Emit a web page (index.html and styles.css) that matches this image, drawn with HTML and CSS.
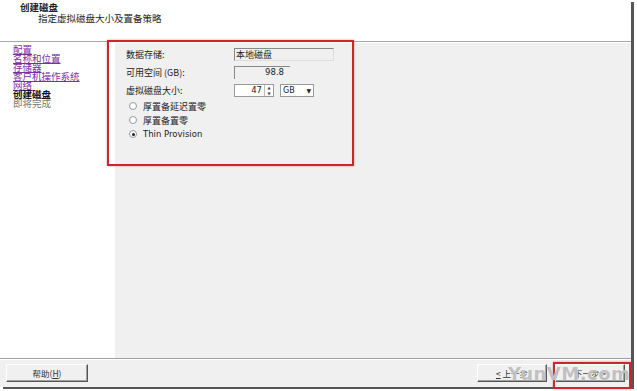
FILE: index.html
```html
<!DOCTYPE html>
<html lang="zh-CN">
<head>
  <meta charset="UTF-8" />
  <title>创建磁盘</title>
  <link rel="stylesheet" href="styles.css">
</head>
<body>
  <div class="window">
    <div class="header">
      <div class="title">创建磁盘</div>
      <div class="subtitle">指定虚拟磁盘大小及置备策略</div>
    </div>

    <div class="main">
      <div class="steps">
        <a href="#">配置</a>
        <a href="#">名称和位置</a>
        <a href="#">存储器</a>
        <a href="#">客户机操作系统</a>
        <a href="#">网络</a>
        <span class="current">创建磁盘</span>
        <span class="pending">即将完成</span>
      </div>

      <div class="content">
        <div class="form">
          <div class="row">
            <span class="label">数据存储:</span>
            <span class="field readonly">本地磁盘</span>
          </div>
          <div class="row">
            <span class="label">可用空间 (GB):</span>
            <span class="field number">98.8</span>
          </div>
          <div class="row">
            <span class="label">虚拟磁盘大小:</span>
            <span class="spinner">
              <span class="value">47</span>
              <span class="spin"><i>▲</i><i>▼</i></span>
            </span>
            <span class="combo">GB <b>▼</b></span>
          </div>
          <div class="radios">
            <label><span class="radio"></span>厚置备延迟置零</label>
            <label><span class="radio"></span>厚置备置零</label>
            <label><span class="radio checked"></span>Thin Provision</label>
          </div>
        </div>
      </div>
    </div>

    <div class="footer">
      <button class="btn">帮助(<u>H</u>)</button>
      <div class="nav">
        <button class="btn"><u>&lt;</u> 上一步</button>
        <button class="btn next">下一步 <u>&gt;</u></button>
      </div>
    </div>

    <!-- annotation marks drawn over the dialog -->
    <div class="mark mark-form"></div>
    <div class="mark mark-next"></div>
    <div class="watermark">YunVM.com</div>
  </div>
</body>
</html>
```

FILE: styles.css
```css
body {
  margin: 0;
  width: 637px;
  height: 391px;
  overflow: hidden;
  background: #fff;
  font-family: "Noto Sans CJK SC", "DejaVu Sans", sans-serif;
  font-size: 9px;
  color: #222;
}
.window {
  position: relative;
  width: 631px;
  height: 387px;
  display: flex;
  flex-direction: column;
  background: #fff;
  box-shadow: 3px 2px 0 #555;
}
.header {
  height: 42px;
  border-bottom: 1px solid #a8a8a8;
  padding: 2px 0 0 20px;
  box-sizing: border-box;
  line-height: 10px;
}
.title {
  font-weight: bold;
  font-size: 9.5px;
}
.subtitle {
  margin-top: 1px;
  padding-left: 18px;
  font-size: 9.5px;
}
.main {
  flex: 1;
  display: flex;
  border-top: 1px solid #fff;
}
.steps {
  width: 115px;
  padding: 2px 0 0 13px;
  box-sizing: border-box;
  display: flex;
  flex-direction: column;
  line-height: 9px;
  font-size: 9.5px;
}
.steps a {
  color: #7b2f9e;
  text-decoration: underline;
  width: max-content;
}
.steps .current {
  font-weight: bold;
  color: #111;
}
.steps .pending {
  color: #777;
}
.content {
  flex: 1;
  background: #f0f0f0;
  padding: 5px 0 0 11px;
}
.form {
  width: 210px;
}
.row {
  display: flex;
  align-items: center;
  height: 13px;
  margin-bottom: 5px;
}
.row:nth-child(3) {
  margin-bottom: 0;
}
.label {
  width: 108px;
}
.field {
  height: 13px;
  box-sizing: border-box;
  line-height: 11px;
  border-top: 1px solid #888;
  border-left: 1px solid #888;
}
.readonly {
  width: 100px;
  padding-left: 1px;
  border-right: 1px solid #ddd;
  border-bottom: 1px solid #ddd;
}
.number {
  width: 56px;
  text-align: right;
  padding-right: 6px;
  font-family: "DejaVu Sans", sans-serif;
  font-size: 8.5px;
}
.spinner {
  display: flex;
  width: 40px;
  height: 13px;
  box-sizing: border-box;
  background: #fff;
  border: 1px solid #999;
  font-family: "DejaVu Sans", sans-serif;
  font-size: 8.5px;
}
.spinner .value {
  flex: 1;
  text-align: right;
  padding-right: 2px;
  line-height: 11px;
}
.spin {
  width: 8px;
  display: flex;
  flex-direction: column;
  border-left: 1px solid #bbb;
}
.spin i {
  flex: 1;
  font-style: normal;
  font-size: 4px;
  line-height: 5px;
  text-align: center;
  color: #444;
}
.combo {
  margin-left: 6px;
  width: 34px;
  height: 13px;
  box-sizing: border-box;
  background: #fff;
  border: 1px solid #999;
  padding-left: 2px;
  line-height: 11px;
  font-family: "DejaVu Sans", sans-serif;
  font-size: 8px;
  display: flex;
  justify-content: space-between;
}
.combo b {
  font-size: 6px;
  padding-right: 2px;
}
.radios {
  display: flex;
  flex-direction: column;
  padding: 2px 0 0 3px;
}
.radios label {
  display: flex;
  align-items: center;
  height: 14px;
  gap: 6px;
}
.radios label:last-child {
  font-family: "DejaVu Sans", sans-serif;
  font-size: 8.5px;
}
.radio {
  width: 6px;
  height: 6px;
  border-radius: 50%;
  border: 1px solid #999;
  background: #fff;
  position: relative;
}
.radio.checked::after {
  content: "";
  position: absolute;
  left: 1.5px;
  top: 1.5px;
  width: 3px;
  height: 3px;
  border-radius: 50%;
  background: #222;
}
.footer {
  height: 29px;
  background: #f0f0f0;
  border-top: 1px solid #a0a0a0;
  box-shadow: inset 0 1px 0 #fff;
  display: flex;
  align-items: flex-start;
  justify-content: space-between;
  padding: 5px 6px 0 6px;
  box-sizing: border-box;
}
.nav {
  display: flex;
  gap: 8px;
}
.btn {
  width: 82px;
  height: 18px;
  padding: 0;
  font-family: "Noto Sans CJK SC", "DejaVu Sans", sans-serif;
  font-size: 8.5px;
  color: #333;
  background: #f0f0f0;
  border: 1px solid;
  border-color: #fff #555 #555 #fff;
  box-shadow: inset -1px -1px 0 #a0a0a0;
}
.nav .btn {
  width: 70px;
}
.mark {
  position: absolute;
  border: 2px solid #c8282e;
  box-shadow: 0 0 2px rgba(200, 40, 46, 0.5);
}
.mark-form {
  left: 107px;
  top: 40px;
  width: 243px;
  height: 122px;
}
.mark-next {
  left: 553px;
  top: 362px;
  width: 74px;
  height: 23px;
}
.watermark {
  position: absolute;
  left: 508px;
  top: 363px;
  font-family: "DejaVu Sans", sans-serif;
  font-weight: bold;
  font-size: 18px;
  letter-spacing: 0.5px;
  color: rgba(150, 150, 150, 0.6);
  text-shadow: 0 0 1px #fff;
}
```
